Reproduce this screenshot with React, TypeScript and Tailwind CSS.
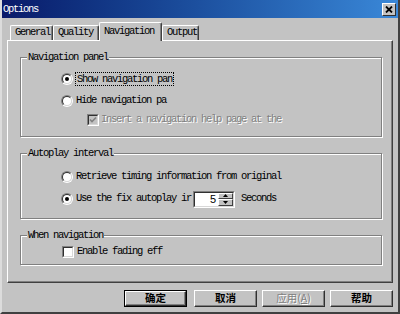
import React from "react";

const GRAY = "bg-[#c3c3c3]";

function Radio({ checked }: { checked?: boolean }) {
  return (
    <div className="w-[12px] h-[12px] shrink-0 rounded-full border border-t-[#808080] border-l-[#808080] border-r-white border-b-white">
      <div className="w-full h-full rounded-full border border-t-[#303030] border-l-[#303030] border-r-[#d8d8d8] border-b-[#d8d8d8] bg-white flex items-center justify-center">
        {checked && <div className="w-[4px] h-[4px] rounded-full bg-black" />}
      </div>
    </div>
  );
}

function Checkbox({ checked, disabled }: { checked?: boolean; disabled?: boolean }) {
  return (
    <div className="w-[12px] h-[12px] shrink-0 border border-t-[#808080] border-l-[#808080] border-r-white border-b-white">
      <div
        className={`w-full h-full border border-t-[#303030] border-l-[#303030] border-r-[#d8d8d8] border-b-[#d8d8d8] flex items-center justify-center ${
          disabled ? "bg-[#c3c3c3]" : "bg-white"
        }`}
      >
        {checked && (
          <svg width="8" height="8" viewBox="0 0 8 8">
            <polyline
              points="1,3.5 3,5.5 7,1.5"
              fill="none"
              stroke={disabled ? "#808080" : "#000"}
              strokeWidth="1.6"
            />
          </svg>
        )}
      </div>
    </div>
  );
}

function Group({
  label,
  height,
  children,
}: {
  label: string;
  height: string;
  children: React.ReactNode;
}) {
  return (
    <div
      className={`relative ${height} border border-[#808080] shadow-[1px_1px_0_#fff,inset_1px_1px_0_#fff] flex flex-col`}
    >
      <span className={`absolute -top-[8px] left-[6px] ${GRAY} px-[1px] h-[14px] leading-[14px]`}>
        {label}
      </span>
      {children}
    </div>
  );
}

function Tab({ label, w, selected }: { label: string; w: string; selected?: boolean }) {
  return (
    <div
      className={`${w} ${
        selected ? "h-[19px] -mb-[1px] z-10 pt-[2px]" : "h-[15px]"
      } ${GRAY} border-t border-l border-white border-r border-r-[#404040] shadow-[inset_-1px_0_0_#808080] rounded-t-[2px] pl-[4px] flex items-start leading-[13px]`}
    >
      {label}
    </div>
  );
}

function Button({
  children,
  isDefault,
  className = "",
}: {
  children: React.ReactNode;
  isDefault?: boolean;
  className?: string;
}) {
  return (
    <div
      className={`w-[63px] h-[17px] ${isDefault ? "border border-black" : ""} ${className}`}
    >
      <div className="w-full h-full border border-t-white border-l-white border-r-[#303030] border-b-[#303030] shadow-[inset_-1px_-1px_0_#808080] flex items-center justify-center font-['Noto_Sans_CJK_SC',sans-serif] text-[10.5px] font-bold tracking-normal leading-none">
        {children}
      </div>
    </div>
  );
}

export default function App() {
  return (
    <div
      className={`w-[400px] h-[314px] ${GRAY} flex flex-col border-l-2 border-l-[#dcdcdc] border-r-2 border-r-[#404040] border-b-2 border-b-[#404040] font-['Liberation_Mono',monospace] text-[10.5px] tracking-[-1.3px] text-black overflow-hidden`}
    >
      {/* Title bar */}
      <div className="h-[18px] shrink-0 bg-gradient-to-r from-[#0a1a6a] to-[#3a88d8] flex items-center justify-between pl-[1px] pr-[2px]">
        <span className="text-white leading-none">Options</span>
        <div className="w-[14px] h-[13px] bg-[#c3c3c3] border border-t-white border-l-white border-r-[#303030] border-b-[#303030] flex items-center justify-center">
          <svg width="8" height="7" viewBox="0 0 8 7">
            <path d="M1 0.5 L7 6.5 M7 0.5 L1 6.5" stroke="#000" strokeWidth="1.8" />
          </svg>
        </div>
      </div>

      <div className="flex flex-col px-[5px]">
        {/* Tabs */}
        <div className="mt-[4px] h-[18px] flex items-end pl-[3px]">
          <Tab label="General" w="w-[43px]" />
          <Tab label="Quality" w="w-[46px]" />
          <Tab label="Navigation" w="w-[63px]" selected />
          <Tab label="Output" w="w-[37px]" />
        </div>

        {/* Panel */}
        <div className="h-[243px] border-t border-l border-white border-r border-b border-r-[#404040] border-b-[#404040] shadow-[inset_-1px_-1px_0_#808080] pt-[16px] pl-[12px] pr-[10px] flex flex-col gap-[16px]">
          <Group label="Navigation panel" height="h-[80px]">
            <div className="mt-[14px] h-[14px] flex items-center pl-[40px] gap-[2px]">
              <Radio checked />
              <span className="border border-dotted border-black h-[14px] leading-[12px] pl-[1px] pr-[1px]">
                Show navigation pan
              </span>
            </div>
            <div className="mt-[8px] h-[14px] flex items-center pl-[40px] gap-[3px]">
              <Radio />
              <span>Hide navigation pa</span>
            </div>
            <div className="mt-[5px] h-[14px] flex items-center pl-[66px] gap-[2px]">
              <Checkbox checked disabled />
              <span className="text-[#808080] [text-shadow:1px_1px_0_#fff]">
                Insert a navigation help page at the
              </span>
            </div>
          </Group>

          <Group label="Autoplay interval" height="h-[66px]">
            <div className="mt-[16px] h-[14px] flex items-center pl-[40px] gap-[3px]">
              <Radio />
              <span>Retrieve timing information from original</span>
            </div>
            <div className="mt-[8px] h-[14px] flex items-center pl-[40px] gap-[3px]">
              <Radio checked />
              <span>Use the fix autoplay ir</span>
              <div className="ml-[-1px] w-[42px] h-[17px] shrink-0 border border-t-[#808080] border-l-[#808080] border-r-white border-b-white">
                <div className="w-full h-full border border-t-[#303030] border-l-[#303030] border-r-[#d8d8d8] border-b-[#d8d8d8] bg-white flex">
                  <div className="flex-1 flex items-center justify-end pr-[2px] font-['Liberation_Sans',sans-serif] text-[11px] tracking-normal">
                    5
                  </div>
                  <div className="w-[15px] flex flex-col">
                    <div className="flex-1 bg-[#c3c3c3] border border-t-white border-l-white border-r-[#404040] border-b-[#404040] flex items-center justify-center">
                      <svg width="5" height="3" viewBox="0 0 5 3">
                        <path d="M2.5 0 L5 3 L0 3 Z" fill="#000" />
                      </svg>
                    </div>
                    <div className="flex-1 bg-[#c3c3c3] border border-t-white border-l-white border-r-[#404040] border-b-[#404040] flex items-center justify-center">
                      <svg width="5" height="3" viewBox="0 0 5 3">
                        <path d="M0 0 L5 0 L2.5 3 Z" fill="#000" />
                      </svg>
                    </div>
                  </div>
                </div>
              </div>
              <span className="ml-[3px]">Seconds</span>
            </div>
          </Group>

          <Group label="When navigation" height="h-[30px]">
            <div className="mt-[9px] h-[14px] flex items-center pl-[41px] gap-[3px]">
              <Checkbox />
              <span>Enable fading eff</span>
            </div>
          </Group>
        </div>

        {/* Buttons */}
        <div className="mt-[7px] flex justify-end gap-[5px]">
          <Button isDefault className="mr-[2px]">确定</Button>
          <Button>取消</Button>
          <Button>
            <span className="text-[#808080] [text-shadow:1px_1px_0_#fff] font-normal">
              应用(<span className="underline">A</span>)
            </span>
          </Button>
          <Button>帮助</Button>
        </div>
      </div>
    </div>
  );
}
